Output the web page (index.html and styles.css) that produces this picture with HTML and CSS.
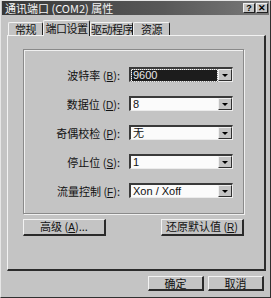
FILE: index.html
```html
<!DOCTYPE html>
<html lang="zh-CN">
<head>
  <meta charset="UTF-8">
  <title>通讯端口 (COM2) 属性</title>
  <link rel="stylesheet" href="styles.css">
</head>
<body>
  <div class="dialog">
    <div class="titlebar">
      <span class="title">通讯端口 (COM2) 属性</span>
      <span class="tbtn">?</span>
      <span class="tbtn">✕</span>
    </div>

    <div class="tabs">
      <div class="tab t1">常规</div>
      <div class="tab t2 active">端口设置</div>
      <div class="tab t3">驱动程序</div>
      <div class="tab t4">资源</div>
    </div>

    <div class="panel">
      <div class="group">
        <div class="row">
          <label>波特率 (<u>B</u>):</label>
          <div class="combo focus"><span class="val sel">9600</span><span class="drop"></span></div>
        </div>
        <div class="row">
          <label>数据位 (<u>D</u>):</label>
          <div class="combo"><span class="val">8</span><span class="drop"></span></div>
        </div>
        <div class="row">
          <label>奇偶校检 (<u>P</u>):</label>
          <div class="combo"><span class="val">无</span><span class="drop"></span></div>
        </div>
        <div class="row">
          <label>停止位 (<u>S</u>):</label>
          <div class="combo"><span class="val">1</span><span class="drop"></span></div>
        </div>
        <div class="row">
          <label>流量控制 (<u>F</u>):</label>
          <div class="combo"><span class="val">Xon / Xoff</span><span class="drop"></span></div>
        </div>
      </div>

      <div class="btnrow">
        <button class="btn wide">高级 (<u>A</u>)...</button>
        <button class="btn wide">还原默认值 (<u>R</u>)</button>
      </div>
    </div>

    <div class="footer">
      <button class="btn small">确定</button>
      <button class="btn small">取消</button>
    </div>
  </div>
</body>
</html>
```

FILE: styles.css
```css
body {
  margin: 0;
  background: #c4c4c4;
  font-family: "Noto Sans CJK SC", "Liberation Sans", sans-serif;
  font-size: 12px;
  color: #111;
}

.dialog {
  width: 271px;
  height: 298px;
  box-sizing: border-box;
  background: #c4c4c4;
  border-top: 1px solid #e6e6e6;
  border-left: 1px solid #e6e6e6;
  border-right: 1px solid #303030;
  border-bottom: 1px solid #303030;
}

/* title bar */
.titlebar {
  height: 14px;
  margin: 0 1px;
  display: flex;
  align-items: center;
  background: linear-gradient(to right, #383838, #585858 60%, #7a7a7a);
  color: #f4f4f4;
  padding-left: 3px;
  padding-right: 1px;
}

.title {
  flex: 1;
  font-size: 11px;
  line-height: 14px;
  white-space: nowrap;
}

.tbtn {
  width: 12px;
  height: 10px;
  box-sizing: border-box;
  background: #c4c4c4;
  color: #000;
  border-top: 1px solid #f0f0f0;
  border-left: 1px solid #f0f0f0;
  border-right: 1px solid #202020;
  border-bottom: 1px solid #202020;
  font-family: "Liberation Sans", sans-serif;
  font-weight: bold;
  font-size: 9px;
  line-height: 8px;
  text-align: center;
  margin-left: 1px;
}

/* tabs */
.tabs {
  display: flex;
  align-items: flex-end;
  height: 15px;
  margin-top: 5px;
  padding-left: 7px;
}

.tab {
  height: 13px;
  box-sizing: border-box;
  border-top: 1px solid #f2f2f2;
  border-left: 1px solid #f2f2f2;
  border-right: 1px solid #202020;
  border-top-left-radius: 2px;
  border-top-right-radius: 2px;
  font-size: 11px;
  line-height: 12px;
  letter-spacing: -0.5px;
  white-space: nowrap;
  text-align: center;
  background: #c4c4c4;
}

.t1 { width: 35px; }
.t2 { width: 47px; }
.t3 { width: 43px; }
.t4 { width: 37px; }

.tab.active {
  height: 16px;
  margin-bottom: -1px;
  line-height: 14px;
  position: relative;
  z-index: 1;
}

/* tab page */
.panel {
  margin-left: 6px;
  width: 259px;
  height: 236px;
  box-sizing: border-box;
  border-top: 1px solid #f2f2f2;
  border-left: 1px solid #f2f2f2;
  border-right: 2px solid #2c2c2c;
  border-bottom: 2px solid #2c2c2c;
  padding: 13px 0 0 15px;
}

.group {
  width: 221px;
  height: 165px;
  box-sizing: border-box;
  border: 1px solid #8a8a8a;
  box-shadow: inset 1px 1px 0 #f0f0f0, 1px 1px 0 #f0f0f0;
  padding-top: 17px;
  display: flex;
  flex-direction: column;
  gap: 14px;
}

.row {
  display: flex;
  align-items: center;
  height: 15px;
}

.row label {
  width: 96px;
  text-align: right;
  font-size: 11px;
  white-space: nowrap;
}

u {
  text-decoration: underline;
  font-family: "Liberation Sans", sans-serif;
  font-size: 10px;
}

.combo {
  margin-left: 9px;
  width: 104px;
  height: 15px;
  box-sizing: border-box;
  background: #fbfbfb;
  border-top: 2px solid #3a3a3a;
  border-left: 2px solid #3a3a3a;
  border-right: 1px solid #ececec;
  border-bottom: 1px solid #ececec;
  display: flex;
  align-items: center;
  padding-left: 1px;
}

.val {
  flex: 1;
  height: 11px;
  font-family: "Liberation Sans", sans-serif;
  font-size: 11px;
  line-height: 11px;
  padding-left: 1px;
}

.val.sel {
  background: #1c1c1c;
  color: #e8e8e8;
  outline: 1px dotted #888;
  margin-right: 1px;
}

.drop {
  width: 14px;
  height: 12px;
  box-sizing: border-box;
  background: #c4c4c4;
  border-top: 1px solid #f0f0f0;
  border-left: 1px solid #f0f0f0;
  border-right: 1px solid #303030;
  border-bottom: 1px solid #303030;
  display: flex;
  align-items: center;
  justify-content: center;
}

.drop::after {
  content: "";
  border-left: 3px solid transparent;
  border-right: 3px solid transparent;
  border-top: 3px solid #000;
}

/* buttons */
.btnrow {
  width: 221px;
  margin-top: 5px;
  display: flex;
  justify-content: space-between;
}

.btn {
  height: 17px;
  box-sizing: border-box;
  background: #c4c4c4;
  border-top: 1px solid #f2f2f2;
  border-left: 1px solid #f2f2f2;
  border-right: 2px solid #2a2a2a;
  border-bottom: 2px solid #2a2a2a;
  font-family: "Noto Sans CJK SC", sans-serif;
  font-size: 11px;
  line-height: 13px;
  color: #111;
  padding: 0;
}

.btn.wide { width: 83px; }
.btn.small { width: 56px; height: 15px; line-height: 11px; }

.footer {
  display: flex;
  justify-content: flex-end;
  gap: 4px;
  margin-top: 5px;
  padding-right: 6px;
}
```
